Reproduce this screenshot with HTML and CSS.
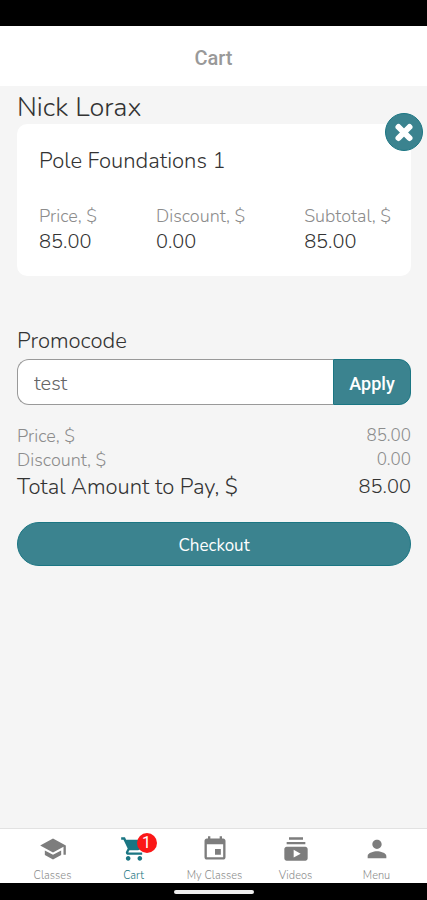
FILE: index.html
```
<!DOCTYPE html>
<html lang="en">
<head>
<meta charset="utf-8">
<meta name="viewport" content="width=device-width, initial-scale=1">
<title>Cart</title>
<link rel="stylesheet" href="styles.css">
</head>
<body>
<div class="status-bar"></div>
<header class="app-header"><h1>Cart</h1></header>
<main class="content">
  <h2 class="customer">Nick Lorax</h2>
  <section class="card">
    <button class="remove" type="button" aria-label="Remove item">
      <svg viewBox="0 0 36 36" aria-hidden="true"><path d="M12.500 13L23.500 24M23.500 13L12.500 24"/></svg>
    </button>
    <h3 class="item-name">Pole Foundations 1</h3>
    <dl class="amounts">
      <div><dt>Price, $</dt><dd>85.00</dd></div>
      <div><dt>Discount, $</dt><dd>0.00</dd></div>
      <div><dt>Subtotal, $</dt><dd>85.00</dd></div>
    </dl>
  </section>
  <form class="promo">
    <label for="promocode">Promocode</label>
    <div class="promo-field">
      <input id="promocode" type="text" value="test">
      <button type="button">Apply</button>
    </div>
  </form>
  <dl class="summary">
    <div><dt>Price, $</dt><dd>85.00</dd></div>
    <div><dt>Discount, $</dt><dd>0.00</dd></div>
    <div class="total"><dt>Total Amount to Pay, $</dt><dd>85.00</dd></div>
  </dl>
  <button class="checkout" type="button">Checkout</button>
</main>
<nav class="tabs">
  <a href="#classes"><svg viewBox="0 0 24 24" aria-hidden="true"><path d="M5 13.180v4L12 21l7-3.820v-4L12 17l-7-3.820zM12 3L1 9l11 6 9-4.910V17h2V9L12 3z"/></svg><span>Classes</span></a>
  <a href="#cart" class="active"><svg viewBox="0 0 24 24" aria-hidden="true"><path d="M7 18c-1.100 0-1.990.9-1.990 2S5.900 22 7 22s2-.9 2-2-.9-2-2-2zM1 2v2h2l3.600 7.590-1.350 2.450c-.16.28-.25.61-.25.960 0 1.100.9 2 2 2h12v-2H7.420c-.14 0-.25-.11-.25-.25l.03-.12.9-1.630h7.450c.75 0 1.410-.41 1.750-1.030l3.580-6.490A1 1 0 0 0 20 4H5.210l-.94-2H1zm16 16c-1.100 0-1.990.9-1.990 2s.89 2 1.990 2 2-.9 2-2-.9-2-2-2z"/></svg><b class="badge">1</b><span>Cart</span></a>
  <a href="#my-classes"><svg viewBox="0 0 24 24" aria-hidden="true"><path d="M17 12h-5v5h5v-5zM16 1v2H8V1H6v2H5c-1.110 0-1.990.9-1.990 2L3 19c0 1.100.89 2 2 2h14c1.100 0 2-.9 2-2V5c0-1.100-.9-2-2-2h-1V1h-2zm3 18H5V8h14v11z"/></svg><span>My Classes</span></a>
  <a href="#videos"><svg viewBox="0 0 24 24" aria-hidden="true"><path d="M20 8H4V6h16v2zm-2-6H6v2h12V2zm4 10v8c0 1.100-.9 2-2 2H4c-1.100 0-2-.9-2-2v-8c0-1.100.9-2 2-2h16c1.100 0 2 .9 2 2zm-6 4l-6-3.270v6.530L16 16z"/></svg><span>Videos</span></a>
  <a href="#menu"><svg viewBox="0 0 24 24" aria-hidden="true"><path d="M12 12c2.210 0 4-1.790 4-4s-1.790-4-4-4-4 1.790-4 4 1.790 4 4 4zm0 2c-2.670 0-8 1.340-8 4v2h16v-2c0-2.660-5.330-4-8-4z"/></svg><span>Menu</span></a>
</nav>
<div class="gesture-bar"><i></i></div>
</body>
</html>
```
FILE: styles.css
```
:root {
  --teal: #3b838f;
  --teal-dark: #1b7683;
  --ink: #333;
  --muted: #8c8c8c;
}
* { box-sizing: border-box; }
body {
  margin: 0;
  min-height: 100vh;
  display: flex;
  flex-direction: column;
  background: #f5f5f5;
  color: var(--ink);
  font-family: Nunito, "Open Sans", sans-serif;
  font-weight: 300;
}
h1, h2, h3, dl, dd { margin: 0; font-weight: inherit; }
button, input { font: inherit; border: 0; padding: 0; margin: 0; }
.status-bar { height: 26px; background: #000; }
.app-header {
  height: 60px;
  display: flex;
  align-items: center;
  justify-content: center;
  padding-top: 4px;
  background: #fff;
}
.app-header h1 {
  font-family: Roboto, sans-serif;
  font-size: 20px;
  font-weight: 500;
  color: #999;
}
.content {
  flex: 1;
  display: flex;
  flex-direction: column;
  padding: 6px 16px 16px 17px;
}
.customer { font-size: 27px; line-height: 32px; }
.card {
  position: relative;
  padding: 20px 20px 20px 22px;
  background: #fff;
  border-radius: 10px;
}
.remove {
  position: absolute;
  top: -11px;
  right: -12px;
  width: 38px;
  height: 38px;
  border: 1px solid var(--teal-dark);
  border-radius: 50%;
  background: var(--teal);
}
.remove svg { display: block; width: 100%; }
.remove path { stroke: #fff; stroke-width: 6; stroke-linecap: round; }
.item-name { font-size: 22px; line-height: 34px; margin-bottom: 26px; }
.amounts { display: flex; justify-content: space-between; }
.amounts dt { font-size: 18px; line-height: 24px; color: var(--muted); }
.amounts dd { font-size: 20px; line-height: 28px; }
.promo { margin-top: 48px; }
.promo label { display: block; font-size: 22px; line-height: 34px; }
.promo-field { display: flex; height: 46px; margin-top: 1px; }
.promo input {
  flex: 1;
  min-width: 0;
  padding: 2px 16px 0;
  border: 1px solid #999;
  border-right: 0;
  border-radius: 12px 0 0 12px;
  background: #fff;
  color: #666;
  font-size: 20px;
}
.promo button {
  width: 78px;
  padding-top: 2px;
  border: 1px solid var(--teal-dark);
  border-radius: 0 12px 12px 0;
  background: var(--teal);
  color: #fff;
  font-family: Roboto, sans-serif;
  font-size: 18px;
  font-weight: 500;
}
.summary { margin-top: 19px; }
.summary div {
  display: flex;
  justify-content: space-between;
  font-size: 18px;
  line-height: 24px;
  color: var(--muted);
}
.summary dd { font-size: 17px; }
.summary .total { font-size: 22px; line-height: 30px; color: var(--ink); }
.summary .total dd { font-size: 20px; }
.checkout {
  height: 44px;
  margin-top: 20px;
  padding-top: 3px;
  border: 1px solid var(--teal-dark);
  border-radius: 22px;
  background: var(--teal);
  color: #fff;
  font-size: 17px;
  font-weight: 400;
}
.tabs {
  display: flex;
  height: 55px;
  padding: 0 10px 0 12px;
  border-top: 1px solid #e2e2e2;
  background: #fff;
}
.tabs a {
  position: relative;
  flex: 1;
  display: flex;
  flex-direction: column;
  align-items: center;
  justify-content: space-between;
  padding-top: 6px;
  color: var(--muted);
  font-size: 11px;
  font-weight: 300;
  line-height: 14px;
  text-decoration: none;
}
.tabs .active { color: var(--teal-dark); }
.tabs svg { width: 28px; height: 28px; fill: #7d7d7d; }
.tabs .active svg { fill: var(--teal-dark); }
.badge {
  position: absolute;
  top: 4px;
  left: calc(50% + 3px);
  width: 20px;
  height: 20px;
  border-radius: 50%;
  background: #fb1717;
  color: #fff;
  font: 400 16px/20px Roboto, sans-serif;
  text-align: center;
}
.gesture-bar {
  height: 17px;
  display: flex;
  align-items: center;
  justify-content: center;
  background: #000;
}
.gesture-bar i { width: 80px; height: 4px; border-radius: 2px; background: #eee; }
```
